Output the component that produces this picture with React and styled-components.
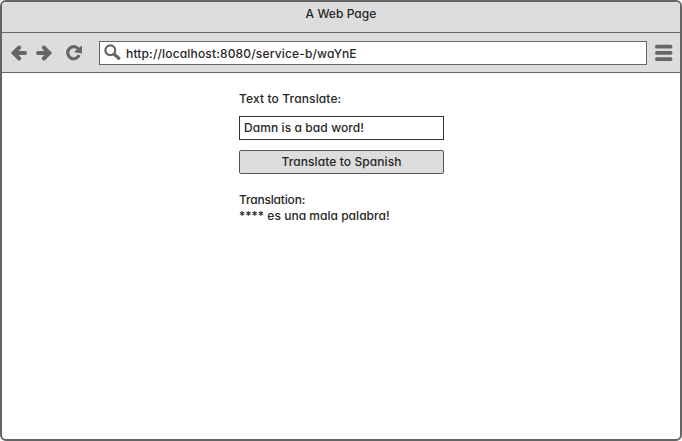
import React from "react";
import styled, { createGlobalStyle } from "styled-components";

const GlobalStyle = createGlobalStyle`
  * { box-sizing: border-box; }
  body {
    margin: 0;
    background: #fff;
    color: #262626;
    font: 500 12px/16px Inter, "Open Sans", sans-serif;
    font-feature-settings: "cv11" 1, "calt" 0;
  }
`;

const BrowserWindow = styled.main`
  width: 682px;
  height: 441px;
  border: 2px solid #646464;
  border-radius: 6px;
  overflow: hidden;
  display: flex;
  flex-direction: column;
`;

const TitleBar = styled.header`
  height: 31px;
  padding-top: 4px;
  background: #ddd;
  border-bottom: 1px solid #666;
  text-align: center;
`;

const Toolbar = styled.nav`
  height: 40px;
  display: flex;
  align-items: center;
  padding: 0 7px 0 8px;
  background: #ddd;
  border-bottom: 1px solid #666;
`;

const Icon = styled.svg`
  display: block;
  flex: none;
  margin-right: ${(p) => p.$gap || 0}px;
  fill: none;
  stroke: #666;
`;

const AddressBar = styled.div`
  flex: 1;
  height: 24px;
  margin-right: 8px;
  padding-left: 4px;
  display: flex;
  align-items: center;
  background: #fff;
  border: 1px solid #666;
`;

const Page = styled.section`
  width: 205px;
  margin: 18px 0 0 237px;
  display: flex;
  flex-direction: column;
`;

const Line = styled.div`
  white-space: nowrap;
`;

const Field = styled.div`
  height: 24px;
  margin: 9px 0 10px;
  padding: 3px 4px;
  border: 1px solid #333;
`;

const Button = styled.button`
  height: 24px;
  margin: 0 0 18px;
  padding: 0 0 1px;
  border: 1px solid #555;
  border-radius: 2px;
  background: #ddd;
  color: inherit;
  font: inherit;
  font-feature-settings: inherit;
`;

const Text = styled.span`
  letter-spacing: ${(p) => p.$spacing || 0}px;
  white-space: nowrap;
`;

const Address = styled(Text)`
  padding-top: 2px;
`;

const Arrow = ({ flip, gap }) => (
  <Icon width="18" height="18" viewBox="0 0 18 18" $gap={gap} strokeWidth="4">
    <g transform={flip ? "translate(18 0) scale(-1 1)" : undefined}>
      <path d="M4 9H15" strokeLinecap="round" />
      <path d="M9.2 3.5L3.7 9L9.2 14.5" strokeLinecap="round" strokeLinejoin="miter" />
    </g>
  </Icon>
);

export default function App() {
  return (
    <>
      <GlobalStyle />
      <BrowserWindow>
        <TitleBar><Text $spacing={0.05}>A Web Page</Text></TitleBar>
        <Toolbar>
          <Arrow gap={7} />
          <Arrow flip gap={12} />
          <Icon width="18" height="18" viewBox="0 0 18 18" $gap={16}>
            <path d="M14.2 11.2A6 6 0 1 1 13.2 4.7" strokeWidth="3.2" />
            <path d="M17 1.5V9.5L8.8 8Z" fill="#666" stroke="none" />
          </Icon>
          <AddressBar>
            <Icon width="17" height="17" viewBox="0 0 17 17" $gap={5}>
              <circle cx="6.3" cy="6.3" r="4.9" strokeWidth="2.2" />
              <path d="M10.2 10.2L14.8 14.3" strokeWidth="3.2" strokeLinecap="round" />
            </Icon>
            <Address $spacing={0.16}>http://localhost:8080/service-b/waYnE</Address>
          </AddressBar>
          <Icon width="18" height="19" viewBox="0 0 18 19" strokeWidth="3.8" strokeLinecap="round">
            <path d="M1.9 3.7H15.6M1.9 9.9H15.6M1.9 16.1H15.6" />
          </Icon>
        </Toolbar>
        <Page>
          <Line><Text $spacing={0.13}>Text to Translate:</Text></Line>
          <Field><Text $spacing={0.09}>Damn is a bad word!</Text></Field>
          <Button><Text $spacing={0.1}>Translate to Spanish</Text></Button>
          <Line><Text $spacing={-0.18}>Translation:</Text></Line>
          <Line><Text $spacing={0.03}>**** es una mala palabra!</Text></Line>
        </Page>
      </BrowserWindow>
    </>
  );
}
